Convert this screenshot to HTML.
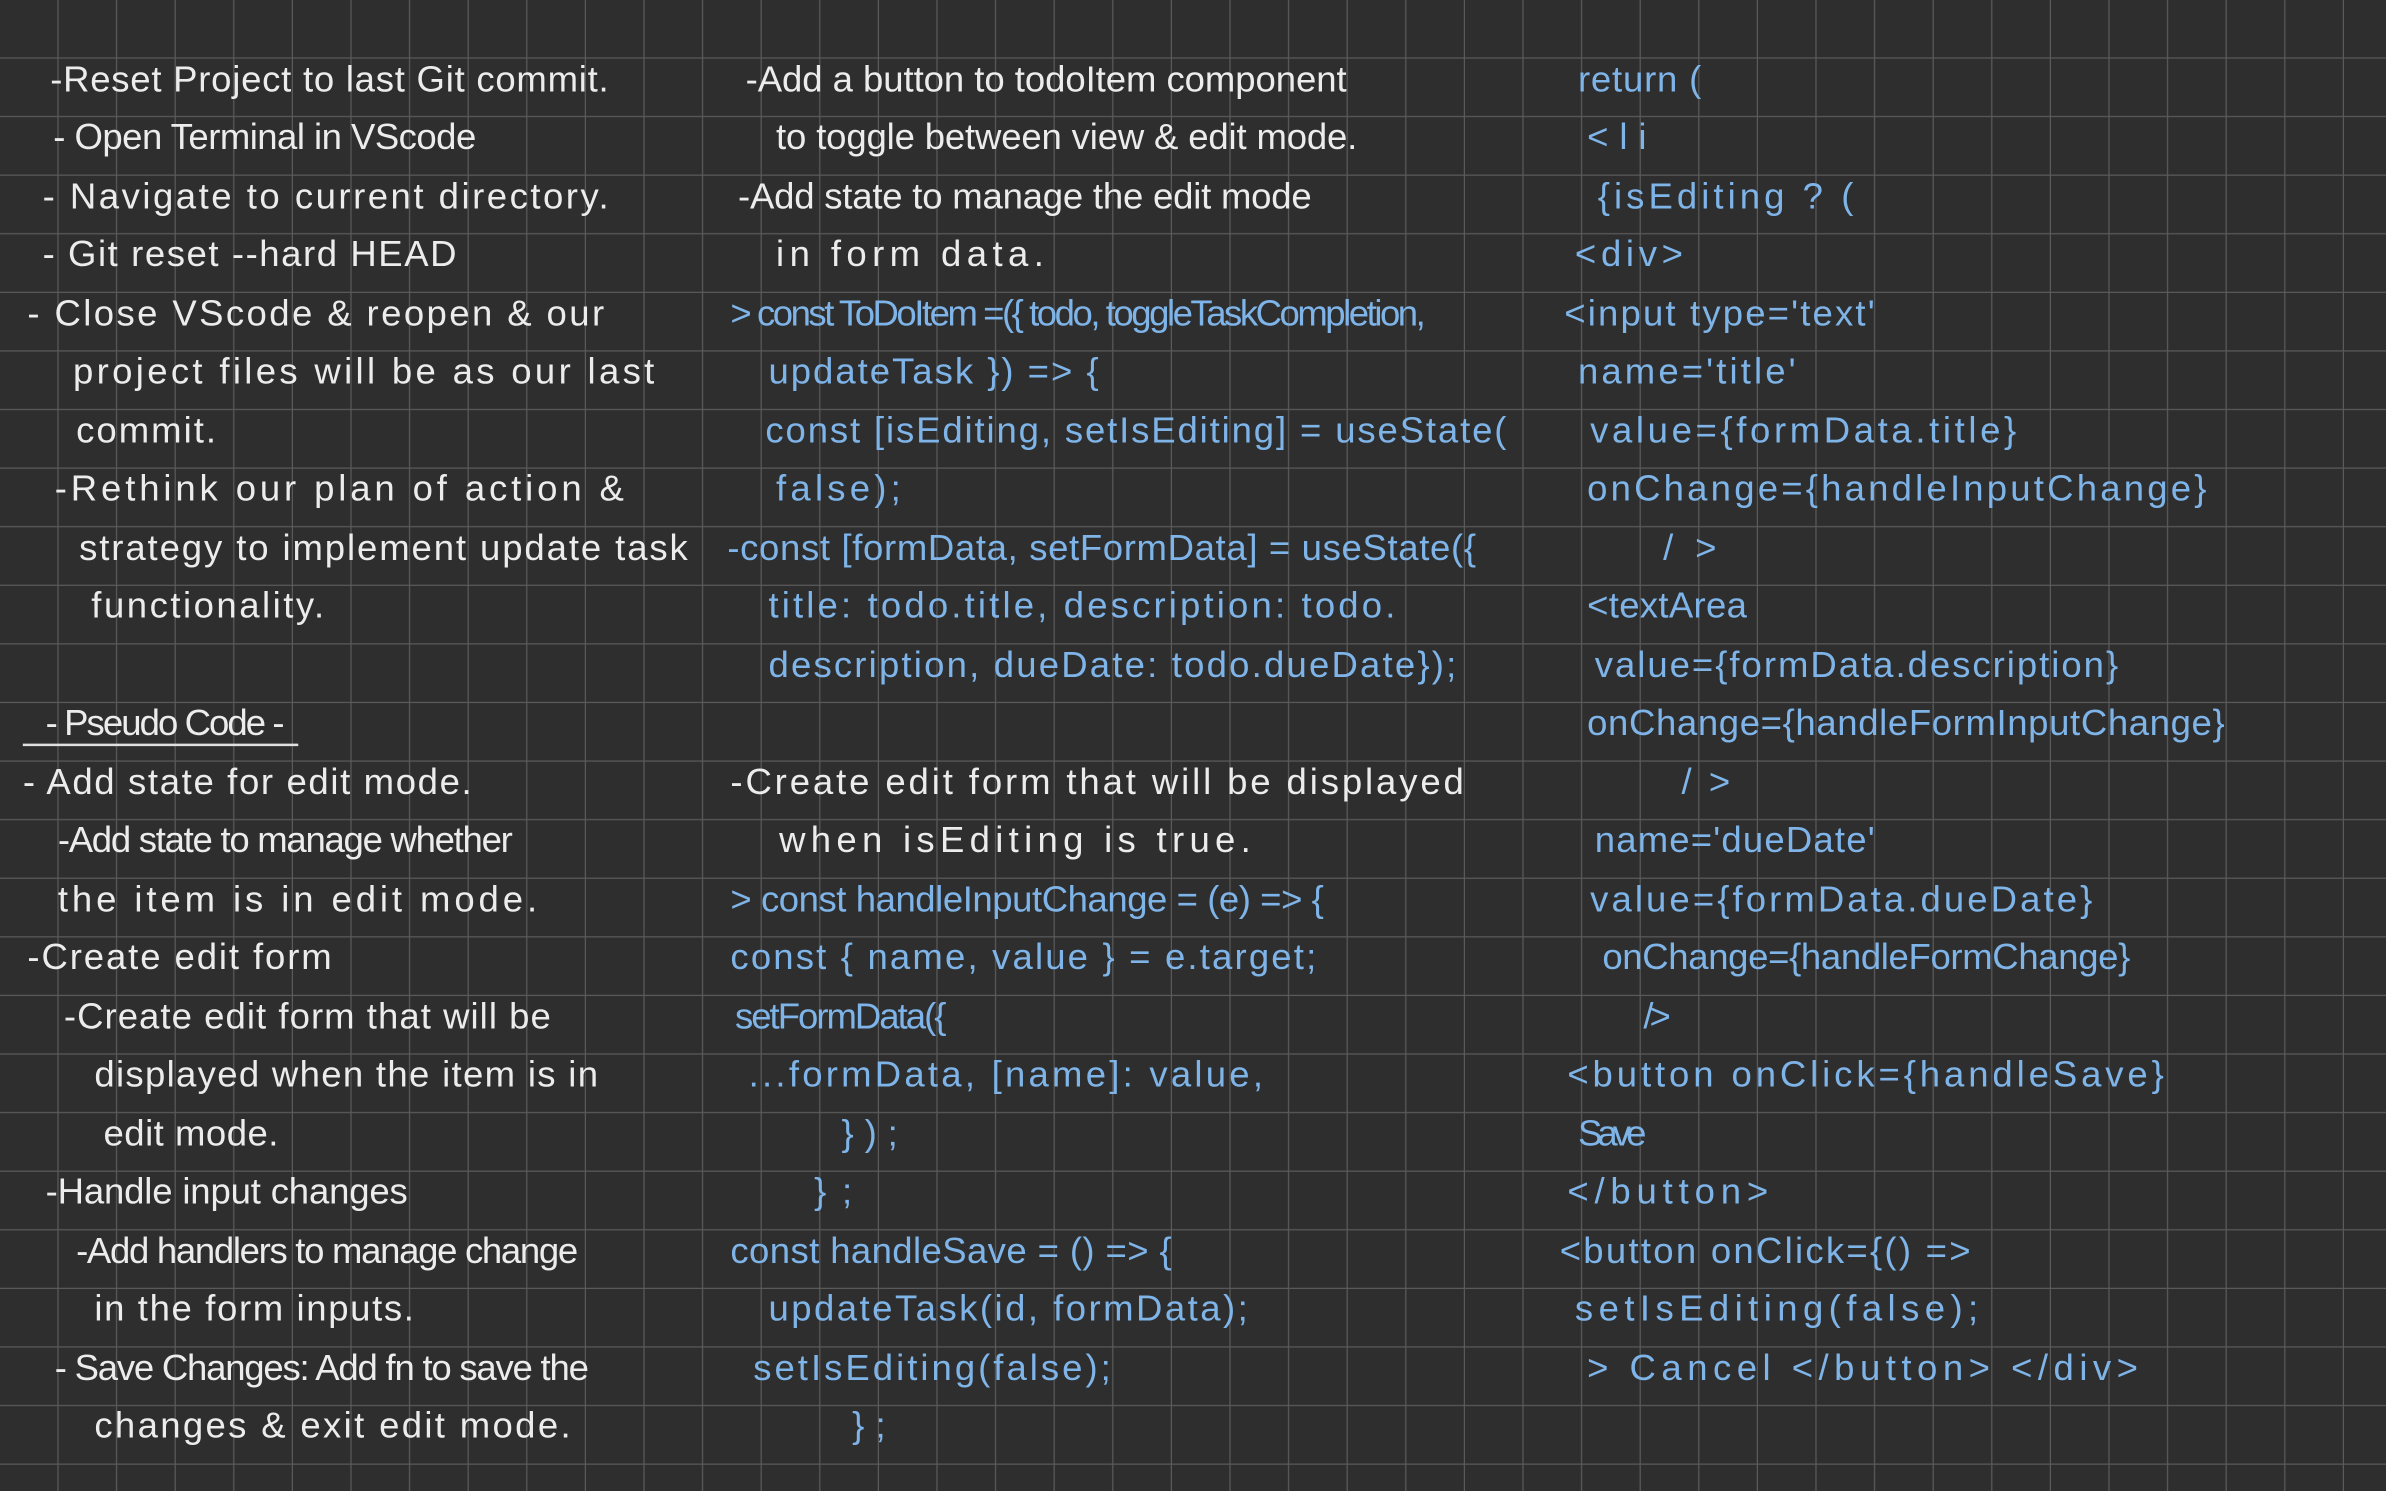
<!DOCTYPE html>
<html><head><meta charset="utf-8">
<style>
html,body{margin:0;padding:0;background:#2e2e2e;}
svg{display:block;}
text{font-family:"Liberation Sans",sans-serif;font-size:24px;}
.w{fill:#ececec;}
.b{fill:#7fb4e8;}
</style></head>
<body>
<svg width="2386" height="1491" viewBox="0 0 1568 980" preserveAspectRatio="none" xmlns="http://www.w3.org/2000/svg">
<defs>
<pattern id="g" x="0" y="0" width="38.51" height="38.51" patternUnits="userSpaceOnUse">
<rect x="37.7" y="0" width="1.6" height="38.51" fill="#5a5a5a"/>
<rect x="0" y="37.7" width="38.51" height="1.6" fill="#5a5a5a"/>
</pattern>
</defs>
<rect width="1568" height="980" fill="#2e2e2e"/>
<rect width="1568" height="980" fill="url(#g)"/>
<line x1="15" y1="489.6" x2="196" y2="489.6" stroke="#e0e0e0" stroke-width="1.6"/>

<text class="w" x="33" y="60" textLength="367" lengthAdjust="spacing">-Reset Project to last Git commit.</text>
<text class="w" x="35" y="98" textLength="278" lengthAdjust="spacing">- Open Terminal in VScode</text>
<text class="w" x="28" y="137" textLength="372" lengthAdjust="spacing">- Navigate to current directory.</text>
<text class="w" x="28" y="175" textLength="272" lengthAdjust="spacing">- Git reset --hard HEAD</text>
<text class="w" x="18" y="214" textLength="379" lengthAdjust="spacing">- Close VScode &amp; reopen &amp; our</text>
<text class="w" x="48" y="252" textLength="382" lengthAdjust="spacing">project files will be as our last</text>
<text class="w" x="50" y="291" textLength="92" lengthAdjust="spacing">commit.</text>
<text class="w" x="36" y="329" textLength="374" lengthAdjust="spacing">-Rethink our plan of action &amp;</text>
<text class="w" x="52" y="368" textLength="400" lengthAdjust="spacing">strategy to implement update task</text>
<text class="w" x="60" y="406" textLength="153" lengthAdjust="spacing">functionality.</text>
<text class="w" x="30" y="483" textLength="157" lengthAdjust="spacing">- Pseudo Code -</text>
<text class="w" x="15" y="522" textLength="295" lengthAdjust="spacing">- Add state for edit mode.</text>
<text class="w" x="38" y="560" textLength="299" lengthAdjust="spacing">-Add state to manage whether</text>
<text class="w" x="38" y="599" textLength="315" lengthAdjust="spacing">the item is in edit mode.</text>
<text class="w" x="18" y="637" textLength="200" lengthAdjust="spacing">-Create edit form</text>
<text class="w" x="42" y="676" textLength="320" lengthAdjust="spacing">-Create edit form that will be</text>
<text class="w" x="62" y="714" textLength="331" lengthAdjust="spacing">displayed when the item is in</text>
<text class="w" x="68" y="753" textLength="115" lengthAdjust="spacing">edit mode.</text>
<text class="w" x="30" y="791" textLength="238" lengthAdjust="spacing">-Handle input changes</text>
<text class="w" x="50" y="830" textLength="330" lengthAdjust="spacing">-Add handlers to manage change</text>
<text class="w" x="62" y="868" textLength="210" lengthAdjust="spacing">in the form inputs.</text>
<text class="w" x="36" y="907" textLength="351" lengthAdjust="spacing">- Save Changes: Add fn to save the</text>
<text class="w" x="62" y="945" textLength="313" lengthAdjust="spacing">changes &amp; exit edit mode.</text>

<text class="w" x="490" y="60" textLength="395" lengthAdjust="spacing">-Add a button to todoItem component</text>
<text class="w" x="510" y="98" textLength="382" lengthAdjust="spacing">to toggle between view &amp; edit mode.</text>
<text class="w" x="485" y="137" textLength="377" lengthAdjust="spacing">-Add state to manage the edit mode</text>
<text class="w" x="510" y="175" textLength="176" lengthAdjust="spacing">in form data.</text>
<text class="b" x="480" y="214" textLength="457" lengthAdjust="spacing">&gt; const ToDoItem =({ todo, toggleTaskCompletion,</text>
<text class="b" x="505" y="252" textLength="217" lengthAdjust="spacing">updateTask }) =&gt; {</text>
<text class="b" x="503" y="291" textLength="487" lengthAdjust="spacing">const [isEditing, setIsEditing] = useState(</text>
<text class="b" x="510" y="329" textLength="82" lengthAdjust="spacing">false);</text>
<text class="b" x="478" y="368" textLength="492" lengthAdjust="spacing">-const [formData, setFormData] = useState({</text>
<text class="b" x="505" y="406" textLength="412" lengthAdjust="spacing">title: todo.title, description: todo.</text>
<text class="b" x="505" y="445" textLength="452" lengthAdjust="spacing">description, dueDate: todo.dueDate});</text>
<text class="w" x="480" y="522" textLength="482" lengthAdjust="spacing">-Create edit form that will be displayed</text>
<text class="w" x="512" y="560" textLength="310" lengthAdjust="spacing">when isEditing is true.</text>
<text class="b" x="480" y="599" textLength="390" lengthAdjust="spacing">&gt; const handleInputChange = (e) =&gt; {</text>
<text class="b" x="480" y="637" textLength="385" lengthAdjust="spacing">const { name, value } = e.target;</text>
<text class="b" x="483" y="676" textLength="139" lengthAdjust="spacing">setFormData({</text>
<text class="b" x="492" y="714" textLength="338" lengthAdjust="spacing">...formData, [name]: value,</text>
<text class="b" x="553" y="753" textLength="37" lengthAdjust="spacing">});</text>
<text class="b" x="535" y="791" textLength="25" lengthAdjust="spacing">};</text>
<text class="b" x="480" y="830" textLength="290" lengthAdjust="spacing">const handleSave = () =&gt; {</text>
<text class="b" x="505" y="868" textLength="315" lengthAdjust="spacing">updateTask(id, formData);</text>
<text class="b" x="495" y="907" textLength="235" lengthAdjust="spacing">setIsEditing(false);</text>
<text class="b" x="560" y="945" textLength="22" lengthAdjust="spacing">};</text>

<text class="b" x="1037" y="60" textLength="81" lengthAdjust="spacing">return (</text>
<text class="b" x="1043" y="98" textLength="39" lengthAdjust="spacing">&lt;li</text>
<text class="b" x="1050" y="137" textLength="168" lengthAdjust="spacing">{isEditing ? (</text>
<text class="b" x="1035" y="175" textLength="71" lengthAdjust="spacing">&lt;div&gt;</text>
<text class="b" x="1028" y="214" textLength="204" lengthAdjust="spacing">&lt;input type='text'</text>
<text class="b" x="1037" y="252" textLength="143" lengthAdjust="spacing">name='title'</text>
<text class="b" x="1045" y="291" textLength="280" lengthAdjust="spacing">value={formData.title}</text>
<text class="b" x="1043" y="329" textLength="407" lengthAdjust="spacing">onChange={handleInputChange}</text>
<text class="b" x="1093" y="368" textLength="35" lengthAdjust="spacing">/&gt;</text>
<text class="b" x="1043" y="406" textLength="105" lengthAdjust="spacing">&lt;textArea</text>
<text class="b" x="1048" y="445" textLength="344" lengthAdjust="spacing">value={formData.description}</text>
<text class="b" x="1043" y="483" textLength="419" lengthAdjust="spacing">onChange={handleFormInputChange}</text>
<text class="b" x="1105" y="522" textLength="32" lengthAdjust="spacing">/&gt;</text>
<text class="b" x="1048" y="560" textLength="184" lengthAdjust="spacing">name='dueDate'</text>
<text class="b" x="1045" y="599" textLength="330" lengthAdjust="spacing">value={formData.dueDate}</text>
<text class="b" x="1053" y="637" textLength="347" lengthAdjust="spacing">onChange={handleFormChange}</text>
<text class="b" x="1080" y="676" textLength="18" lengthAdjust="spacing">/&gt;</text>
<text class="b" x="1030" y="714" textLength="392" lengthAdjust="spacing">&lt;button onClick={handleSave}</text>
<text class="b" x="1037" y="753" textLength="45" lengthAdjust="spacing">Save</text>
<text class="b" x="1030" y="791" textLength="132" lengthAdjust="spacing">&lt;/button&gt;</text>
<text class="b" x="1025" y="830" textLength="270" lengthAdjust="spacing">&lt;button onClick={() =&gt;</text>
<text class="b" x="1035" y="868" textLength="265" lengthAdjust="spacing">setIsEditing(false);</text>
<text class="b" x="1043" y="907" textLength="362" lengthAdjust="spacing">&gt; Cancel &lt;/button&gt; &lt;/div&gt;</text>
</svg>
</body></html>
